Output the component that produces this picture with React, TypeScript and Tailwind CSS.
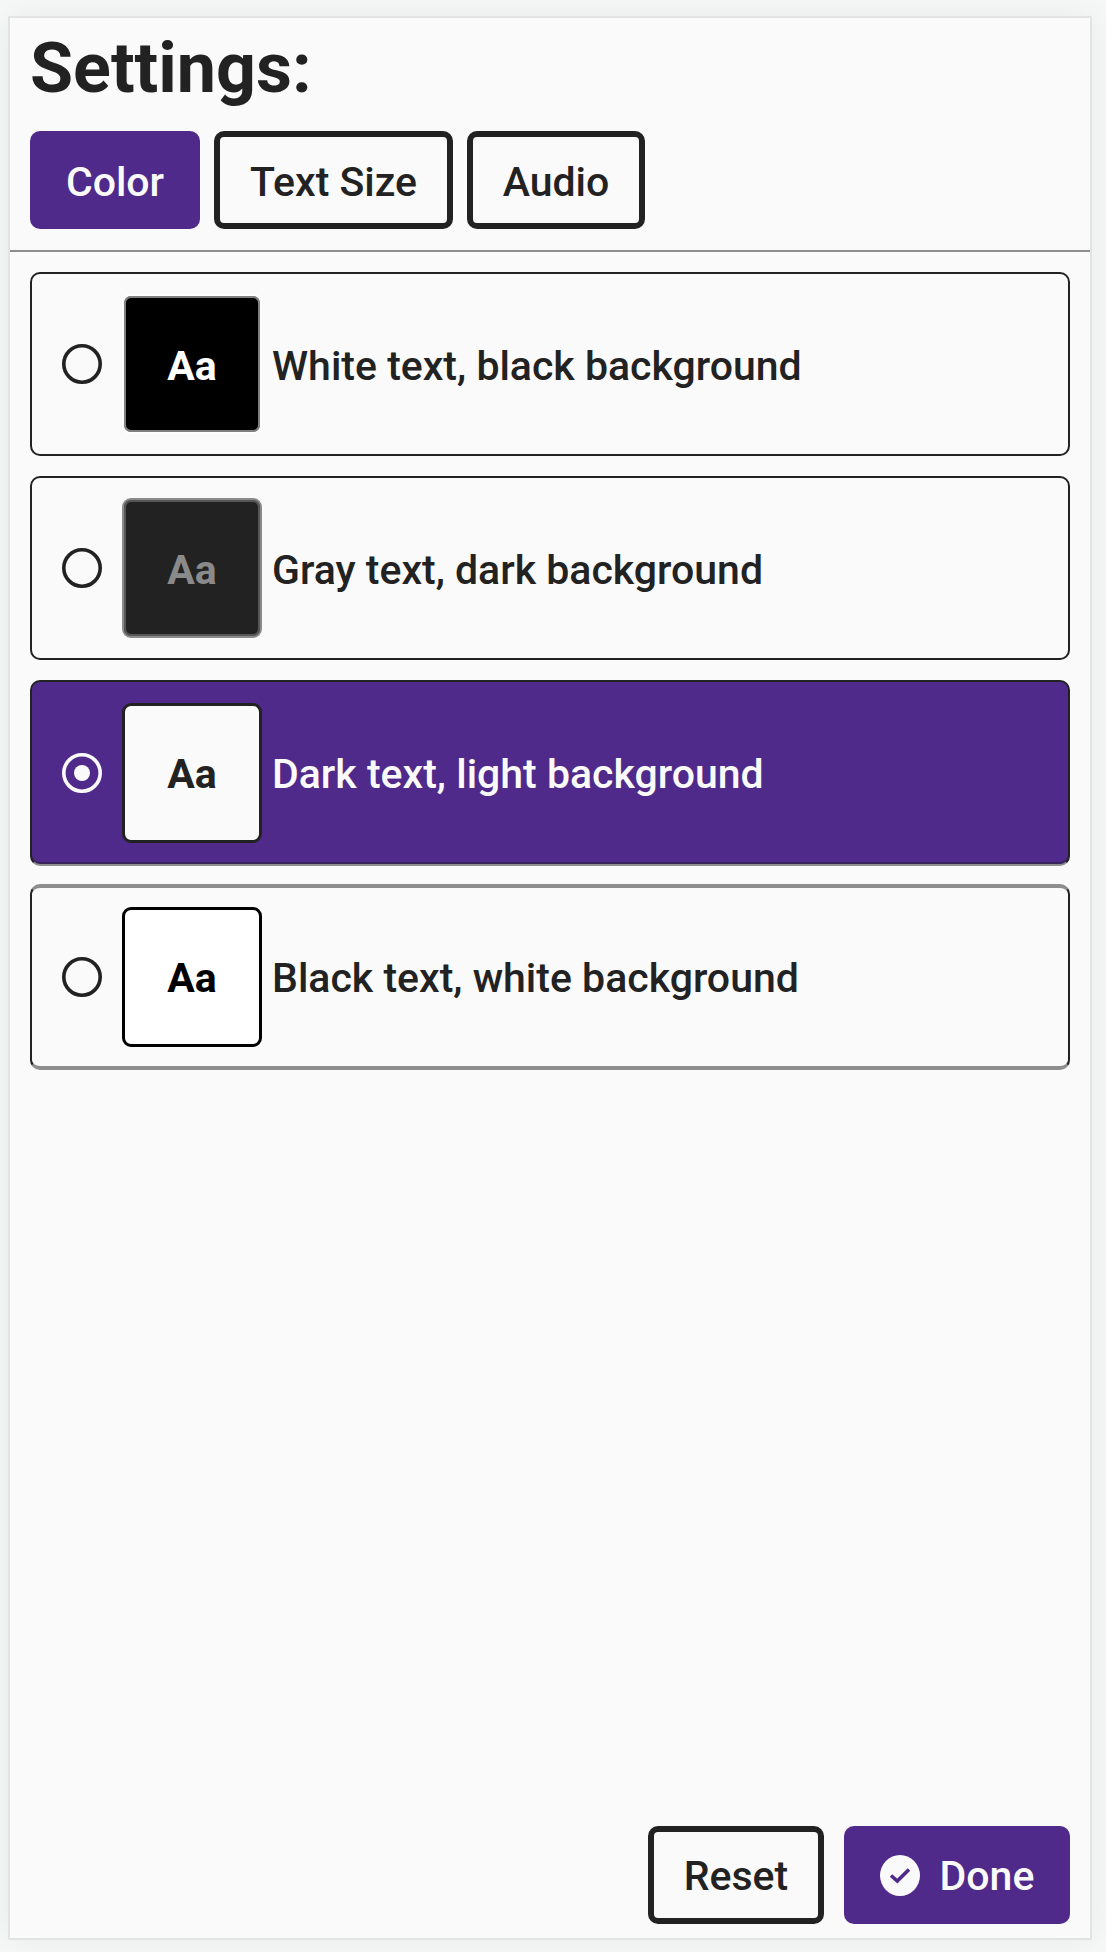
import React from "react";

type Option = {
  label: string;
  row: string;
  swatch: string;
  text: string;
  selected?: boolean;
};

const options: Option[] = [
  {
    label: "White text, black background",
    row: "mt-5 h-[184px] border-2 border-[#222]",
    swatch: "border-2 border-white bg-black text-white shadow-[inset_0_0_0_2px_#808080]",
    text: "pt-[5px]",
  },
  {
    label: "Gray text, dark background",
    row: "mt-5 h-[184px] border-2 border-[#222]",
    swatch: "border-2 border-[#8a8a8a] bg-[#222] text-[#8a8a8a] shadow-[inset_0_0_0_2px_#565656]",
    text: "pt-[5px]",
  },
  {
    label: "Dark text, light background",
    row: "mt-5 h-[186px] border-2 border-[#222] border-b-[#8e8e8e] bg-[#4f2a8a] text-[#fafafa] shadow-[inset_0_-2px_0_#38265a]",
    swatch: "border-[3px] border-[#222] bg-[#fafafa] text-[#222]",
    text: "pt-[3px]",
    selected: true,
  },
  {
    label: "Black text, white background",
    row: "mt-[18px] h-[186px] border-x-2 border-y-4 border-x-[#222] border-y-[#8e8e8e]",
    swatch: "border-[3px] border-black bg-white text-black",
    text: "pt-[3px]",
  },
];

function Radio({ selected }: { selected?: boolean }) {
  return (
    <svg className="h-10 w-10 shrink-0" viewBox="0 0 40 40" fill="none">
      <circle cx="20" cy="20" r="18.2" stroke="currentColor" strokeWidth="3.6" />
      {selected && <circle cx="20" cy="20" r="8" fill="currentColor" />}
    </svg>
  );
}

const button = "flex h-[98px] items-center justify-center rounded-[10px] text-[41px] font-medium";

export default function App() {
  return (
    <div className="h-[1952px] w-[1106px] overflow-hidden bg-[#f6f8f7] pt-4 pl-2 font-[Roboto,sans-serif] text-[#222]">
      <div className="flex h-[1924px] w-[1084px] flex-col border-2 border-[#e2e3e3] bg-[#fafafa] shadow-[0_0_32px_rgba(0,0,0,0.06)]">
        <header className="h-[234px] shrink-0 border-b-2 border-[#8e8e8e] px-5">
          <h1 className="pt-[9px] text-[70px] leading-[82px] font-bold">Settings:</h1>
          <div className="mt-[22px] flex">
            <button className={`${button} w-[170px] bg-[#4f2a8a] pt-[5px] text-[#fafafa]`}>Color</button>
            <button className={`${button} ml-[14px] w-[239px] border-[6px] border-[#222] pt-[5px]`}>Text Size</button>
            <button className={`${button} ml-[14px] w-[178px] border-[6px] border-[#222] pt-[5px]`}>Audio</button>
          </div>
        </header>
        <main className="flex flex-col px-5">
          {options.map((o) => (
            <label key={o.label} className={`flex items-center rounded-[10px] pl-[30px] ${o.row}`}>
              <Radio selected={o.selected} />
              <span className={`ml-5 flex h-[140px] w-[140px] shrink-0 items-center justify-center rounded-[9px] text-[41px] font-bold ${o.swatch}`}>
                <span className={o.text}>Aa</span>
              </span>
              <span className={`ml-[10px] text-[41px] font-medium ${o.text}`}>{o.label}</span>
            </label>
          ))}
        </main>
        <footer className="mt-auto flex justify-end px-5 pb-[14px]">
          <button className={`${button} w-[176px] border-[6px] border-[#222] pt-[3px]`}>Reset</button>
          <button className={`${button} ml-5 w-[226px] bg-[#4f2a8a] text-[#fafafa]`}>
            <svg className="mr-5 h-[41px] w-10" viewBox="0 0 40 41" fill="none">
              <ellipse cx="20" cy="20.5" rx="20" ry="20.5" fill="currentColor" />
              <path d="M11 20.5L17.3 26L29 14.5" stroke="#4f2a8a" strokeWidth="3.6" />
            </svg>
            <span className="pt-[3px]">Done</span>
          </button>
        </footer>
      </div>
    </div>
  );
}
